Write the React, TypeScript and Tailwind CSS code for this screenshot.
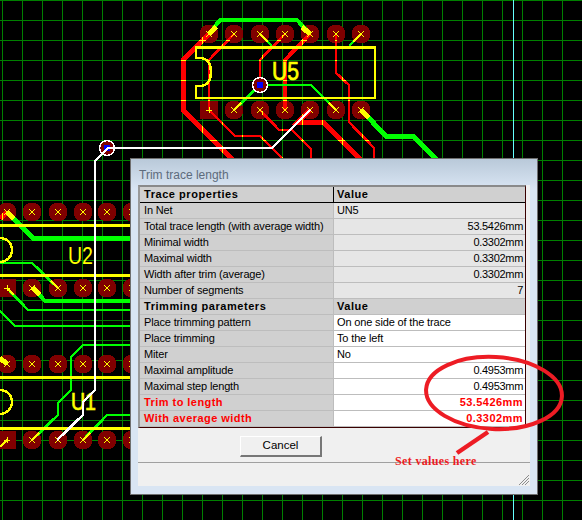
const COLS = Array.from({ length: 29 }, (_, i) => 2 + i * 20);
const ROWS = Array.from({ length: 27 }, (_, i) => i * 20);

const U5_X = [209, 234, 260, 285, 310, 336, 361];
const LOW_X = [32, 58, 83, 107, 132];

type Pt = [number, number];
type Trace = { d: string; w: number };

const RED: Trace[] = [
  { d: "M209 34L183 60V110L236 163", w: 5 },
  { d: "M234 34L209 60V110L235 136H260L287 163", w: 2.6 },
  { d: "M285 34L260 60V85", w: 2.6 },
  { d: "M310 34L285 60V110", w: 4 },
  { d: "M310 110L298 122H323L362 161", w: 5 },
  { d: "M260 110L279 130H292L311 149V160", w: 2.6 },
  { d: "M336 34V73L349 85V122L374 148V160", w: 2.6 },
  { d: "M7 212L0 219", w: 5 },
];

const GREEN: Trace[] = [
  { d: "M209 34L220 20H297L310 34", w: 4 },
  { d: "M260 34L272 46", w: 2.6 },
  { d: "M361 34L349 46", w: 2.6 },
  { d: "M234 110L260 85H311L336 110", w: 2.6 },
  { d: "M361 110L386 136H413L440 163", w: 5 },
  { d: "M7 212L33 238H130", w: 5 },
  { d: "M0 263H32L58 288", w: 2.6 },
  { d: "M33 288L45 301H130", w: 4 },
  { d: "M7 288L28 310H130", w: 2.6 },
  { d: "M0 311L15 326H130", w: 2.6 },
  { d: "M130 345H83L71 357V390L58 403V415L32 440", w: 2.6 },
  { d: "M83 440L107 415H130", w: 2.6 },
];

const STUBS: { a: Pt; b: Pt; w: number }[] = [
  { a: [209, 34], b: [216, 27], w: 5 },
  { a: [310, 34], b: [302, 27], w: 5 },
  { a: [260, 34], b: [268, 42], w: 2.6 },
  { a: [361, 34], b: [353, 42], w: 2.6 },
  { a: [234, 110], b: [241, 103], w: 2.6 },
  { a: [336, 110], b: [329, 103], w: 2.6 },
  { a: [361, 110], b: [369, 118], w: 5 },
  { a: [7, 212], b: [14, 219], w: 5 },
  { a: [33, 288], b: [40, 295], w: 5 },
  { a: [58, 288], b: [51, 281], w: 2.6 },
  { a: [7, 288], b: [14, 295], w: 2.6 },
  { a: [7, 364], b: [0, 358], w: 5 },
  { a: [7, 440], b: [0, 447], w: 2.6 },
  { a: [32, 440], b: [39, 433], w: 2.6 },
  { a: [83, 440], b: [90, 433], w: 2.6 },
];

function Pad({ x, y, square }: { x: number; y: number; square?: boolean }) {
  return square ? (
    <rect x={x - 9} y={y - 9} width="18" height="18" fill="#800000" />
  ) : (
    <circle cx={x} cy={y} r="9.5" fill="#800000" />
  );
}

function PadMark({ x, y, plus }: { x: number; y: number; plus?: boolean }) {
  const d = plus
    ? `M${x - 3} ${y}H${x + 3}M${x} ${y - 3}V${y + 3}`
    : `M${x - 3} ${y - 3}L${x + 3} ${y + 3}M${x + 3} ${y - 3}L${x - 3} ${y + 3}`;
  return <path d={d} stroke="#ffff00" strokeWidth="1" fill="none" />;
}

function Via({ x, y }: { x: number; y: number }) {
  return (
    <g>
      <circle cx={x} cy={y} r="7.5" fill="#800000" stroke="#ffffff" strokeWidth="1.5" />
      <rect x={x - 3} y={y - 3} width="6" height="6" fill="#0000ff" />
    </g>
  );
}

// the yellow copy leaves out the two lines that run along a trace instead of crossing it
function GridLines({ color, skipCol, skipRow }: { color: string; skipCol?: number; skipRow?: number }) {
  return (
    <>
      {COLS.filter((x) => x !== skipCol).map((x) => (
        <line key={x} x1={x + 0.5} x2={x + 0.5} y1="0" y2="520" stroke={color} />
      ))}
      {ROWS.filter((y) => y !== skipRow).map((y) => (
        <line key={y} x1="0" x2="582" y1={y + 0.5} y2={y + 0.5} stroke={color} />
      ))}
    </>
  );
}

function Board() {
  const lowRows = [212, 288, 364, 440];
  return (
    <svg className="block" width="582" height="520" shapeRendering="crispEdges">
      <defs>
        <mask id="red-traces" maskUnits="userSpaceOnUse" x="0" y="0" width="582" height="520">
          {RED.map((t) => (
            <path key={t.d} d={t.d} stroke="#ffffff" strokeWidth={t.w} fill="none" />
          ))}
        </mask>
      </defs>
      <GridLines color="#008000" />
      <line x1="513.5" x2="513.5" y1="0" y2="520" stroke="#66ffff" />

      {U5_X.map((x) => (
        <Pad key={x} x={x} y={34} />
      ))}
      {U5_X.map((x, i) => (
        <Pad key={x} x={x} y={110} square={i === 0} />
      ))}
      {lowRows.map((y) => (
        <g key={y}>
          <Pad x={7} y={y} square={y === 288 || y === 440} />
          {LOW_X.map((x) => (
            <Pad key={x} x={x} y={y} />
          ))}
        </g>
      ))}

      {RED.map((t) => (
        <path key={t.d} d={t.d} stroke="#ff0000" strokeWidth={t.w} fill="none" />
      ))}
      <g mask="url(#red-traces)">
        <GridLines color="#ffff00" skipCol={182} skipRow={120} />
      </g>
      {GREEN.map((t) => (
        <path key={t.d} d={t.d} stroke="#00ff00" strokeWidth={t.w} fill="none" />
      ))}

      <path
        d="M196 58V47.5H375V98H196V86H200C208 86 211 79 211 72C211 65 208 58 200 58H196Z"
        stroke="#ffff00"
        strokeWidth="2.5"
        fill="none"
      />
      <path d="M0 225H130M0 275H130M0 377H130M0 428H130" stroke="#ffff00" strokeWidth="3" fill="none" />
      <path d="M0 238A12 12 0 0 1 0 262M0 390A12 12 0 0 1 0 414" stroke="#ffff00" strokeWidth="2.5" fill="none" />
      <text x="272" y="80" fontSize="25" textLength="27" lengthAdjust="spacingAndGlyphs" stroke="#ffff00" strokeWidth="0.7" fill="#ffff00" className="font-['Liberation_Sans',sans-serif]">
        U5
      </text>
      <text x="68" y="264" fontSize="24" textLength="25" lengthAdjust="spacingAndGlyphs" fill="#ffff00" className="font-['Liberation_Sans',sans-serif]">
        U2
      </text>
      <text x="71" y="410" fontSize="24" textLength="25" lengthAdjust="spacingAndGlyphs" stroke="#ffff00" strokeWidth="0.7" fill="#ffff00" className="font-['Liberation_Sans',sans-serif]">
        U1
      </text>

      {U5_X.map((x) => (
        <PadMark key={x} x={x} y={34} />
      ))}
      {U5_X.map((x, i) => (
        <PadMark key={x} x={x} y={110} plus={i === 0} />
      ))}
      {lowRows.map((y) => (
        <g key={y}>
          <PadMark x={7} y={y} plus={y === 288 || y === 440} />
          {LOW_X.map((x) => (
            <PadMark key={x} x={x} y={y} />
          ))}
        </g>
      ))}
      {STUBS.map((s) => (
        <line
          key={s.a.join() + s.b.join()}
          x1={s.a[0]}
          y1={s.a[1]}
          x2={s.b[0]}
          y2={s.b[1]}
          stroke="#ffff00"
          strokeWidth={s.w}
        />
      ))}

      <Via x={260} y={85} />
      <Via x={107} y={148} />
      <path d="M108 148H272L310 110" stroke="#ffffff" strokeWidth="2.6" fill="none" />
      <path d="M108 148L95 161V390L83 402V415L57 440" stroke="#ffffff" strokeWidth="2.6" fill="none" />
    </svg>
  );
}

type Row = {
  label: string;
  value: string;
  kind?: "head" | "left" | "red";
  white?: boolean;
};

const TABLE: Row[] = [
  { label: "Trace properties", value: "Value", kind: "head" },
  { label: "In Net", value: "UN5", kind: "left" },
  { label: "Total trace length (with average width)", value: "53.5426mm" },
  { label: "Minimal width", value: "0.3302mm" },
  { label: "Maximal width", value: "0.3302mm" },
  { label: "Width after trim (average)", value: "0.3302mm" },
  { label: "Number of segments", value: "7" },
  { label: "Trimming parameters", value: "Value", kind: "head" },
  { label: "Place trimming pattern", value: "On one side of the trace", kind: "left", white: true },
  { label: "Place trimming", value: "To the left", kind: "left", white: true },
  { label: "Miter", value: "No", kind: "left", white: true },
  { label: "Maximal amplitude", value: "0.4953mm", white: true },
  { label: "Maximal step length", value: "0.4953mm", white: true },
  { label: "Trim to length", value: "53.5426mm", kind: "red", white: true },
  { label: "With average width", value: "0.3302mm", kind: "red", white: true },
];

function TableRow({ row, first }: { row: Row; first: boolean }) {
  const head = row.kind === "head";
  const red = row.kind === "red";
  const text = head
    ? "font-bold tracking-[0.55px] text-black"
    : red
      ? "font-bold tracking-[0.45px] text-[#ff0000]"
      : "tracking-[-0.15px] text-black";
  const valueBg = head ? "bg-[#d0d0d0]" : row.white ? "bg-white" : "bg-[#e6e6e6]";
  const align = head || row.kind === "left" ? "justify-start pl-[3px]" : "justify-end pr-[2px]";
  const numeric = !head && !red && row.kind !== "left" ? "tracking-[-0.3px]" : text;
  return (
    <div className={`flex h-4 border-b ${first ? "border-black" : "border-[#bdbdbd]"}`}>
      <div className={`flex w-[193px] shrink-0 items-center bg-[#d0d0d0] pl-1 ${text}`}>{row.label}</div>
      <div className={`flex flex-1 items-center border-l ${first ? "border-black" : "border-[#bdbdbd]"} ${valueBg} ${align} ${numeric}`}>
        {row.value}
      </div>
    </div>
  );
}

function Dialog() {
  return (
    <div className="absolute left-[130px] top-[158px] flex h-[337px] w-[408px] flex-col border border-[#6f6f6f] bg-[linear-gradient(#b9c9d9,#d9e5f3_30px)] px-[7px] pb-2 font-['Liberation_Sans',sans-serif] text-[11px] leading-none">
      <div className="flex h-[26px] shrink-0 items-center pl-[1px] pt-[5px] text-[12px] text-[#5d6b7c]">
        Trim trace length
      </div>
      <div className="flex flex-1 flex-col bg-[#f0f0f0]">
        <div className="mr-[4px] border-b border-l-2 border-r border-t-2 border-b-[#3a0000] border-l-[#9a9a9a] border-r-[#3a0000] border-t-[#8a8a8a]">
          {TABLE.map((row, i) => (
            <TableRow key={row.label} row={row} first={i === 0} />
          ))}
        </div>
        <div className="flex h-[35px] shrink-0 items-center border-b border-[#a0a0a0] pl-[102px] pt-[2px]">
          <button className="h-[21px] w-[82px] border border-b-2 border-r-2 border-white border-b-[#777] border-r-[#777] bg-[#f0f0f0] text-[11.5px] text-black">
            Cancel
          </button>
        </div>
        <div className="relative mt-[2px] flex-1 bg-[#f0f0f0]">
          <svg className="absolute bottom-0 right-0" width="12" height="12" shapeRendering="crispEdges">
            <path d="M11 1L1 11M11 4L4 11M11 7L7 11" stroke="#8c8c8c" fill="none" />
          </svg>
        </div>
      </div>
    </div>
  );
}

export default function App() {
  return (
    <div className="relative h-[520px] w-[582px] overflow-hidden bg-black">
      <Board />
      <Dialog />
      <svg className="absolute left-0 top-0" width="582" height="520">
        <g fill="none" stroke="#ed1c24">
          <ellipse cx="494" cy="393" rx="68" ry="36" strokeWidth="4" transform="rotate(3 494 393)" />
          <path d="M488 432L457 453" strokeWidth="4.5" />
        </g>
      </svg>
      <div className="absolute left-[395px] top-[455px] font-['Liberation_Serif',serif] text-[12px] font-bold leading-none tracking-[0.35px] text-[#ed1c24]">
        Set values here
      </div>
    </div>
  );
}
